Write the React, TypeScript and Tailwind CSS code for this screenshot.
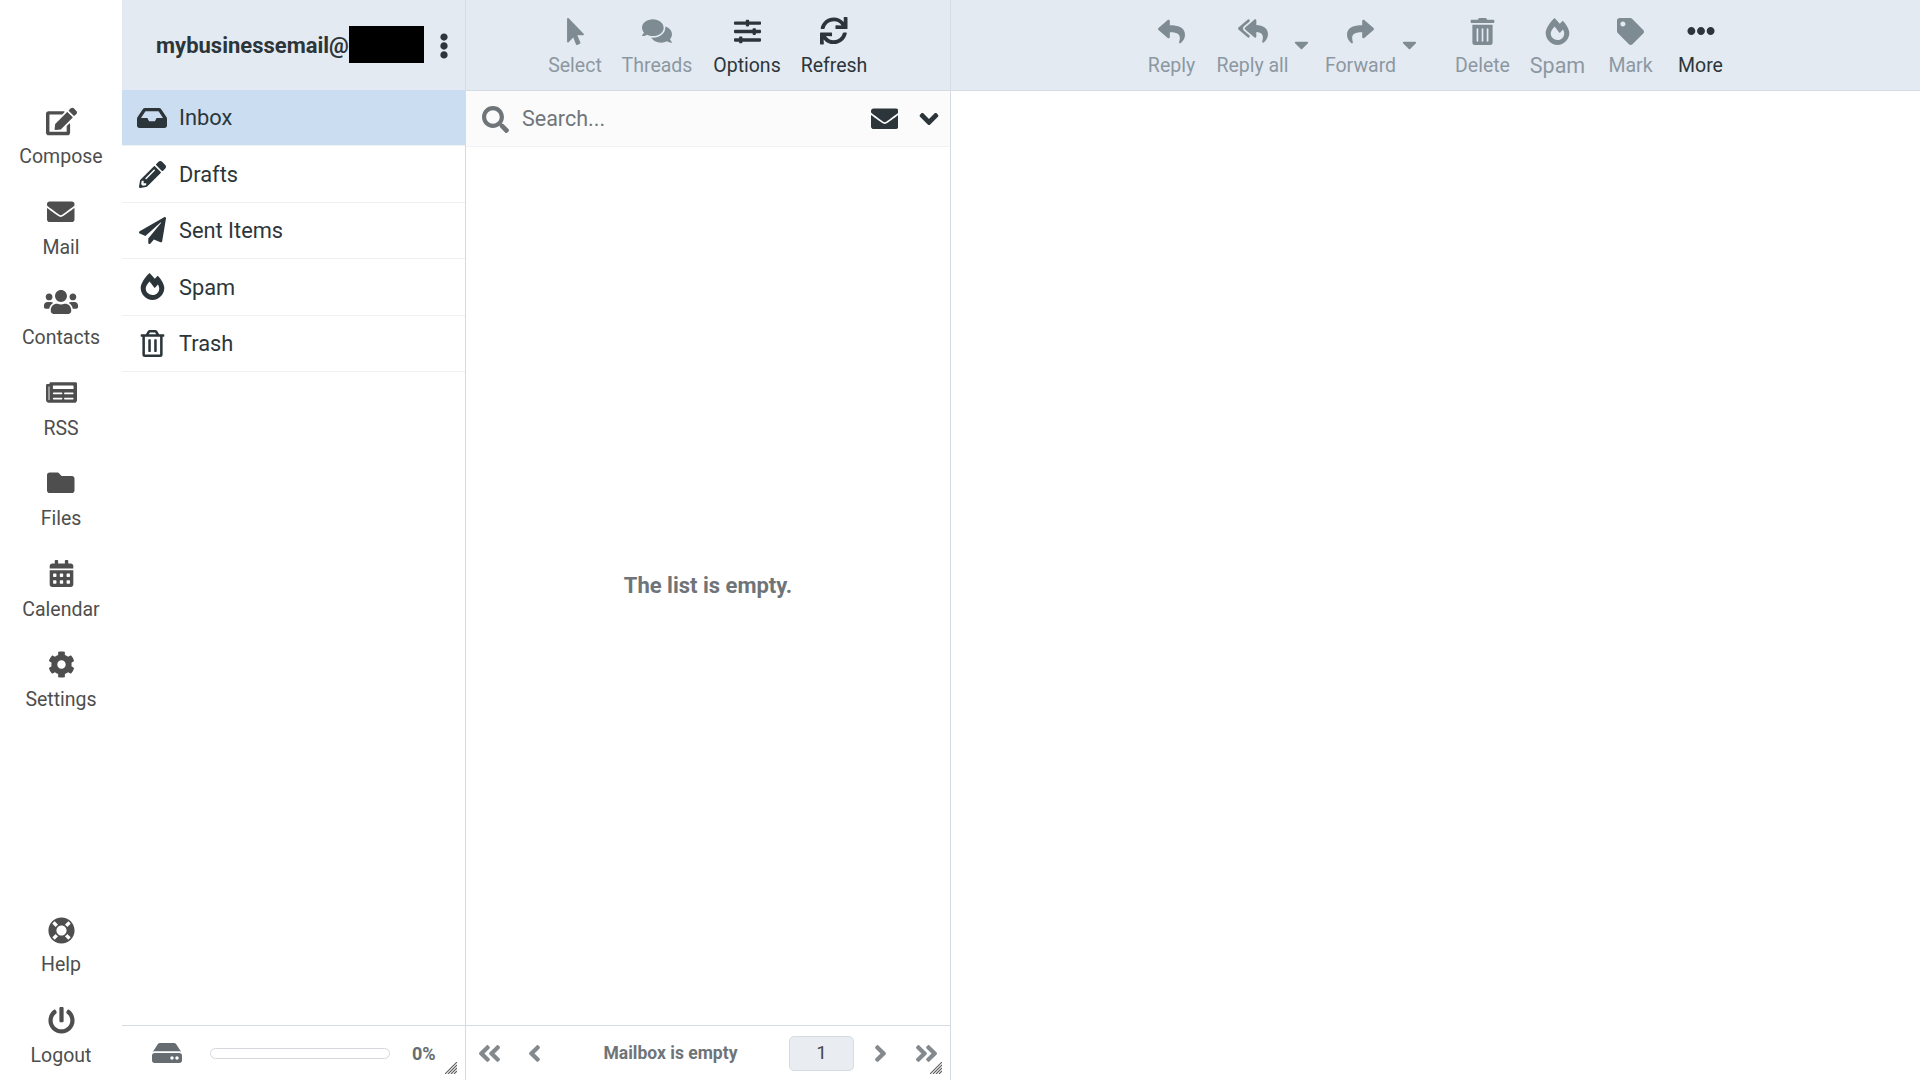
import React from "react";
import {
  FaEdit, FaEnvelope, FaUsers, FaNewspaper, FaFolder, FaCalendarAlt, FaCog, FaLifeRing, FaPowerOff,
  FaInbox, FaPencilAlt, FaPaperPlane, FaFireAlt, FaRegTrashAlt, FaMousePointer, FaComments, FaSlidersH, FaSync,
  FaReply, FaReplyAll, FaShare, FaTrashAlt, FaTag, FaEllipsisH, FaEllipsisV, FaSearch, FaHdd,
  FaAngleDoubleLeft, FaAngleDoubleRight, FaAngleLeft, FaAngleRight, FaAngleDown, FaCaretDown,
} from "react-icons/fa";

const nav = [
  { label: "Compose", icon: FaEdit, size: 31 },
  { label: "Mail", icon: FaEnvelope, size: 27.5 },
  { label: "Contacts", icon: FaUsers, size: 34 },
  { label: "RSS", icon: FaNewspaper, size: 31 },
  { label: "Files", icon: FaFolder, size: 27.5 },
  { label: "Calendar", icon: FaCalendarAlt, size: 27 },
  { label: "Settings", icon: FaCog, size: 27 },
];
const navBottom = [
  { label: "Help", icon: FaLifeRing, size: 27 },
  { label: "Logout", icon: FaPowerOff, size: 27 },
];
const folders = [
  { label: "Inbox", icon: FaInbox, size: 30, active: true },
  { label: "Drafts", icon: FaPencilAlt, size: 27 },
  { label: "Sent Items", icon: FaPaperPlane, size: 27 },
  { label: "Spam", icon: FaFireAlt, size: 27 },
  { label: "Trash", icon: FaRegTrashAlt, size: 27 },
];

function NavItem({ label, icon: Icon, size, bottom }: { label: string; icon: any; size: number; bottom?: boolean }) {
  return (
    <div className="h-[90.5px] flex flex-col items-center pt-[17px] text-[#4e4e4e]">
      <div className="h-[28px] flex items-center justify-center">
        <Icon size={size} />
      </div>
      <div className={`text-[19.5px] leading-[24px] ${bottom ? "mt-[9px]" : "mt-[10px]"}`}>{label}</div>
    </div>
  );
}

function ToolBtn({ label, icon: Icon, size, w, off, big, ml }: { label: string; icon: any; size: number; w: string; off?: boolean; big?: boolean; ml?: string }) {
  return (
    <div className={`${w} ${ml ?? ""} h-full flex flex-col items-center pt-[17px] ${off ? "text-[#8c98a1]" : "text-[#2c363a]"}`}>
      <div className={`h-[28px] flex items-center justify-center ${off ? "text-[#7f8b93]" : "text-[#2c363a]"}`}>
        <Icon size={size} />
      </div>
      <div className={`${big ? "text-[21.5px]" : "text-[19.5px]"} leading-[24px] mt-[8.5px] whitespace-nowrap`}>{label}</div>
    </div>
  );
}

function Caret() {
  return (
    <div className="w-[10px] h-full flex justify-center pt-[33px] text-[#7f8b93] -translate-x-[1px]">
      <FaCaretDown size={23} className="shrink-0" />
    </div>
  );
}

function Grip() {
  return (
    <svg className="absolute right-[8px] bottom-[6px]" width="12" height="12" viewBox="0 0 12 12" stroke="#5e5e5e" strokeWidth="1.1">
      <path d="M0 12L12 0M3 12L12 3M6 12L12 6M9 12L12 9" />
    </svg>
  );
}

export default function App() {
  return (
    <div className="h-screen w-full flex overflow-hidden bg-white font-['Roboto',sans-serif] text-[#2c363a]">
      <aside className="w-[122px] shrink-0 flex flex-col justify-between bg-white">
        <div className="pt-[90px]">
          {nav.map((n) => (
            <NavItem key={n.label} {...n} />
          ))}
        </div>
        <div>
          {navBottom.map((n) => (
            <NavItem key={n.label} {...n} bottom />
          ))}
        </div>
      </aside>

      <section className="w-[344px] shrink-0 flex flex-col border-r border-[#d4dbe2]">
        <header className="h-[90px] shrink-0 bg-[#e4eaf2] flex items-center pl-[34px]">
          <span className="text-[22px] font-bold text-[#2c363a] mt-[1px]">mybusinessemail@</span>
          <span className="w-[75px] h-[37px] bg-black -mt-[2px]" />
          <FaEllipsisV size={26} className="ml-[7px] mt-[1px]" />
        </header>
        <div className="flex-1">
          {folders.map((f) => (
            <div key={f.label} className="h-[56.4px] flex items-center border-b border-[#eef0f2]">
              <div className={`w-full h-full flex items-center ${f.active ? "bg-[#cbddf0]" : ""}`}>
                <div className="w-[30px] ml-[15px] flex justify-center">
                  <f.icon size={f.size} />
                </div>
                <span className="ml-[12px] text-[21.8px] mt-[2px]">{f.label}</span>
              </div>
            </div>
          ))}
        </div>
        <footer className="relative h-[55px] shrink-0 border-t border-[#d4dbe2] flex items-center text-[#666d72]">
          <FaHdd size={30} className="ml-[30px]" />
          <div className="ml-[28px] w-[180px] h-[11px] rounded-full border border-[#d4d8dc]" />
          <span className="ml-[22px] text-[18px] font-bold">0%</span>
          <Grip />
        </footer>
      </section>

      <section className="w-[485px] shrink-0 flex flex-col border-r border-[#d4dbe2]">
        <header className="h-[91px] shrink-0 bg-[#e4eaf2] border-b border-[#d4dbe2] flex justify-center pr-[10px]">
          <ToolBtn label="Select" icon={FaMousePointer} size={27} w="w-[82px]" off />
          <ToolBtn label="Threads" icon={FaComments} size={30} w="w-[82px]" off />
          <ToolBtn label="Options" icon={FaSlidersH} size={27} w="w-[98px]" />
          <ToolBtn label="Refresh" icon={FaSync} size={27.5} w="w-[76px]" />
        </header>
        <div className="h-[56px] shrink-0 bg-[#fbfbfb] border-b border-[#f1f3f4] flex items-center pl-[16px] pr-[6px]">
          <FaSearch size={27} className="text-[#6e7478] mt-[1px]" />
          <span className="ml-[13px] text-[21.5px] text-[#70767a] mt-[1px]">Search...</span>
          <div className="ml-auto flex items-center">
            <FaEnvelope size={27.5} />
            <FaAngleDown size={30} className="ml-[16px]" />
          </div>
        </div>
        <div className="flex-1 flex items-center justify-center">
          <span className="text-[22px] font-bold text-[#6e7478] mb-[1px]">The list is empty.</span>
        </div>
        <footer className="relative h-[55px] shrink-0 border-t border-[#d4dbe2] flex items-center text-[#83898d]">
          <FaAngleDoubleLeft size={27} className="ml-[10px]" />
          <FaAngleLeft size={27} className="ml-[18px]" />
          <span className="ml-[55px] w-[135px] text-center text-[17.5px] font-bold text-[#6e7478] whitespace-nowrap">Mailbox is empty</span>
          <div className="ml-[51px] w-[65px] h-[35px] rounded-[5px] border border-[#d4dbe2] bg-[#e9edf1] flex items-center justify-center text-[19px] text-[#45494c]">1</div>
          <FaAngleRight size={27} className="ml-[13px]" />
          <FaAngleDoubleRight size={27} className="ml-[19px]" />
          <Grip />
        </footer>
      </section>

      <main className="flex-1 flex flex-col">
        <header className="h-[91px] shrink-0 bg-[#e4eaf2] border-b border-[#d4dbe2] flex justify-center pr-[2px]">
          <ToolBtn label="Reply" icon={FaReply} size={27} w="w-[72px]" off />
          <ToolBtn label="Reply all" icon={FaReplyAll} size={30} w="w-[90px]" off />
          <Caret />
          <ToolBtn label="Forward" icon={FaShare} size={27} w="w-[90px]" ml="ml-[8px]" off />
          <Caret />
          <ToolBtn label="Delete" icon={FaTrashAlt} size={27} w="w-[78px]" ml="ml-[28px]" off />
          <ToolBtn label="Spam" icon={FaFireAlt} size={27} w="w-[72px]" off big />
          <ToolBtn label="Mark" icon={FaTag} size={27} w="w-[74px]" off />
          <ToolBtn label="More" icon={FaEllipsisH} size={28} w="w-[66px]" />
        </header>
        <div className="flex-1 bg-white" />
      </main>
    </div>
  );
}
